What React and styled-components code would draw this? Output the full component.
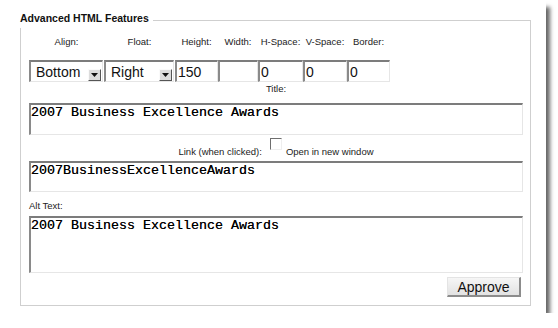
import styled, { createGlobalStyle } from 'styled-components';

const GlobalStyle = createGlobalStyle`
  body {
    margin: 0;
    background: #fff;
    font-family: "Liberation Sans", Arial, sans-serif;
  }
`;

const columns = [
  { label: 'Align:', width: 75, select: 'Bottom' },
  { label: 'Float:', width: 71, select: 'Right' },
  { label: 'Height:', width: 43, value: '150' },
  { label: 'Width:', width: 40, value: '' },
  { label: 'H-Space:', width: 45, value: '0' },
  { label: 'V-Space:', width: 44, value: '0' },
  { label: 'Border:', width: 43, value: '0' },
];

function App() {
  const cols = columns.map((c) => c.width + 'px').join(' ');

  return (
    <>
      <GlobalStyle />
      <Card>
        <Panel>
          <Legend>Advanced HTML Features</Legend>

          <Grid $cols={cols}>
            {columns.map((c) => (
              <SmallLabel key={c.label} $align="center">
                {c.label}
              </SmallLabel>
            ))}
          </Grid>

          <Grid $cols={cols} $gapTop={12}>
            {columns.map((c) =>
              c.select ? (
                <SelectBox key={c.label}>
                  <span>{c.select}</span>
                  <ArrowBtn>
                    <svg width="7" height="4" viewBox="0 0 7 4">
                      <path d="M0 0h7L3.5 4z" fill="#111" />
                    </svg>
                  </ArrowBtn>
                </SelectBox>
              ) : (
                <TextInput key={c.label} defaultValue={c.value} />
              )
            )}
          </Grid>

          <SmallLabel $align="center" $top={1}>Title:</SmallLabel>
          <Field $top={8} $h={32} defaultValue="2007 Business Excellence Awards" />

          <LinkRow>
            <SmallLabel as="span">Link (when clicked):</SmallLabel>
            <Check />
            <SmallLabel as="span">Open in new window</SmallLabel>
          </LinkRow>
          <Field $top={3} $h={31} defaultValue="2007BusinessExcellenceAwards" />

          <SmallLabel $top={8}>Alt Text:</SmallLabel>
          <Field $top={4} $h={57} defaultValue="2007 Business Excellence Awards" />

          <Footer>
            <Button>Approve</Button>
          </Footer>
        </Panel>
      </Card>
    </>
  );
}

export default App;

// STYLES
const Card = styled.div`
  width: 546px;
  height: 313px;
  background: #fff;
  box-shadow: 6px 5px 4px -2px rgba(0, 0, 0, 0.6);
  padding: 20px 0 0 20px;
  box-sizing: border-box;
`;

const Panel = styled.div`
  position: relative;
  width: 511px;
  height: 286px;
  box-sizing: border-box;
  border: 1px solid #cfcfcf;
  padding: 15px 7px 0 8px;
  display: flex;
  flex-direction: column;
`;

const Legend = styled.div`
  position: absolute;
  top: -9px;
  left: -1px;
  background: #fff;
  padding: 0 4px 3px 0;
  font-size: 10.5px;
  line-height: 13px;
  font-weight: bold;
  color: #111;
`;

const Grid = styled.div`
  display: grid;
  grid-template-columns: ${(p) => p.$cols};
  margin-top: ${(p) => p.$gapTop || 0}px;
`;

const SmallLabel = styled.div`
  font-size: 9.5px;
  line-height: 12px;
  color: #222;
  text-align: ${(p) => p.$align || 'left'};
  margin-top: ${(p) => p.$top || 0}px;
  white-space: nowrap;
`;

const inset = `
  box-sizing: border-box;
  border-top: 2px solid #7c7c7c;
  border-left: 2px solid #8a8a8a;
  border-right: 1px solid #e6e6e6;
  border-bottom: 1px solid #e6e6e6;
  background: #fff;
`;

const SelectBox = styled.div`
  ${inset}
  height: 22px;
  margin-right: 1px;
  display: flex;
  align-items: center;
  justify-content: space-between;
  padding: 0 1px 0 5px;
  font-size: 14px;
  color: #111;
`;

const ArrowBtn = styled.div`
  width: 13px;
  height: 12px;
  margin-top: 6px;
  box-sizing: border-box;
  background: #dcdcdc;
  border-top: 1px solid #fafafa;
  border-left: 1px solid #fafafa;
  border-right: 1px solid #555;
  border-bottom: 1px solid #555;
  display: flex;
  align-items: center;
  justify-content: center;
`;

const TextInput = styled.input`
  ${inset}
  width: 100%;
  height: 22px;
  margin: 0;
  padding: 0 0 0 1px;
  font-family: "Liberation Sans", Arial, sans-serif;
  font-size: 14px;
  color: #111;
  outline: none;
`;

const Field = styled.textarea`
  ${inset}
  display: block;
  width: 100%;
  height: ${(p) => p.$h}px;
  margin: ${(p) => p.$top}px 0 0;
  padding: 0;
  resize: none;
  overflow: hidden;
  font-family: "Liberation Mono", "Courier New", monospace;
  font-size: 13.33px;
  color: #000;
  text-shadow: 0 0 0.15px #333;
  outline: none;
`;

const LinkRow = styled.div`
  display: flex;
  align-items: flex-end;
  justify-content: center;
  margin-top: 3px;
  height: 20px;
`;

const Check = styled.span`
  width: 12px;
  height: 12px;
  box-sizing: border-box;
  margin: 0 4px 8px 8px;
  border-top: 1px solid #6e6e6e;
  border-left: 1px solid #6e6e6e;
  border-right: 1px solid #eee;
  border-bottom: 1px solid #eee;
`;

const Footer = styled.div`
  display: flex;
  justify-content: flex-end;
  margin-top: 4px;
  padding-right: 2px;
`;

const Button = styled.button`
  width: 74px;
  height: 20px;
  box-sizing: border-box;
  padding: 0;
  background: linear-gradient(#f6f6f6, #e2e2e2);
  border-top: 1px solid #e4e4e4;
  border-left: 1px solid #e4e4e4;
  border-right: 2px solid #8c8c8c;
  border-bottom: 2px solid #8c8c8c;
  font-family: "Liberation Sans", Arial, sans-serif;
  font-size: 14px;
  color: #111;
`;
